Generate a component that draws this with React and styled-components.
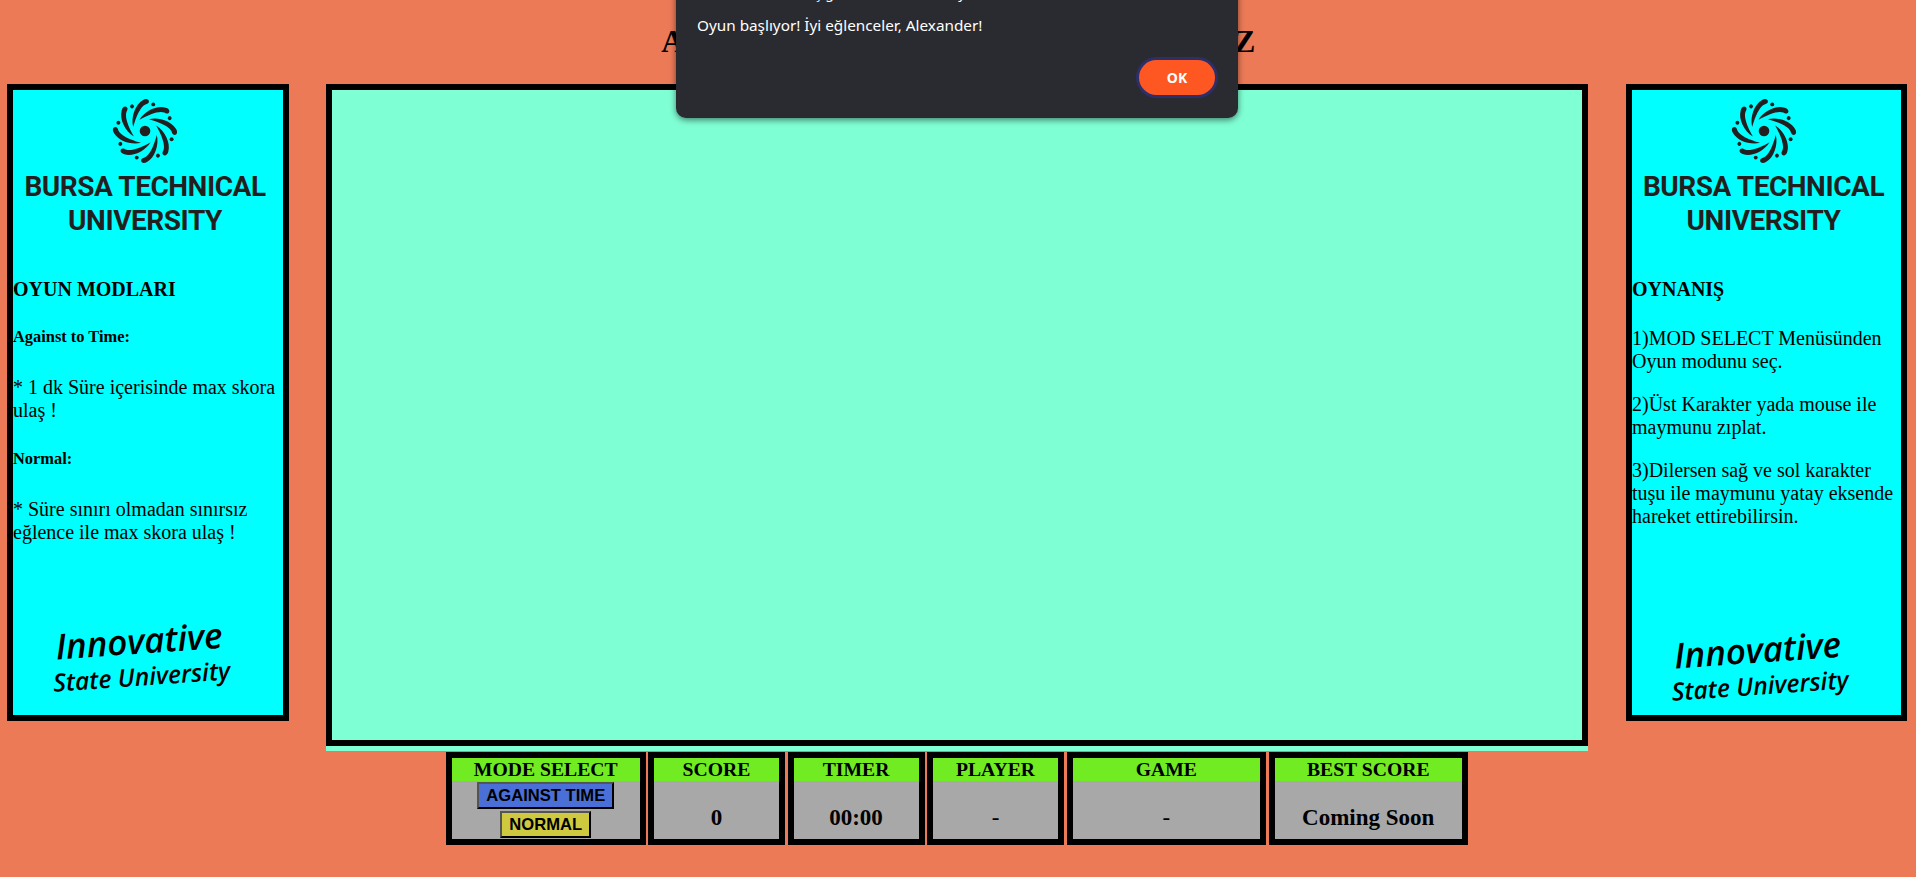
import React from "react";
import styled, { createGlobalStyle } from "styled-components";

const GlobalStyle = createGlobalStyle`
  html, body {
    margin: 0;
    padding: 0;
    background: #ec7a57;
    font-family: "Liberation Serif", "Times New Roman", serif;
    color: #000;
    overflow: hidden;
  }
`;

function Emblem() {
  const angles = [0, 45, 90, 135, 180, 225, 270, 315];
  return (
    <EmblemSvg viewBox="-34.5 -34.5 69 69">
      <circle r="5.4" fill="#231f20" />
      {angles.map((a) => (
        <g key={a} transform={`rotate(${a})`} fill="#231f20">
          <path d="M-12 -4 C-14.5 -14 -10 -27 -2 -31.5 C1 -33.5 4 -32.5 4 -30 C4 -28 2 -27.5 0.5 -27 C-4.5 -25 -9 -15 -12 -4 Z" />
          <circle cx="8.4" cy="-27" r="2" />
        </g>
      ))}
    </EmblemSvg>
  );
}

function Panel({ children, scriptGap, width }) {
  return (
    <SidePanel $width={width}>
      <LogoBlock>
        <Emblem />
        <LogoText>BURSA TECHNICAL<br />UNIVERSITY</LogoText>
      </LogoBlock>
      <PanelBody>{children}</PanelBody>
      <Motto $gap={scriptGap}>
        <MottoBig>Innovative</MottoBig>
        <MottoSmall>State University</MottoSmall>
      </Motto>
    </SidePanel>
  );
}

function StatBox({ title, value, wide, light }) {
  return (
    <Stat $wide={wide}>
      <StatTitle>{title}</StatTitle>
      <StatValue $light={light}>{value}</StatValue>
    </Stat>
  );
}

export default function App() {
  return (
    <Page>
      <GlobalStyle />
      <Title>ALEXANDER OYUNUNA HOŞGELDİNİZ</Title>
      <Columns>
        <Panel scriptGap={55} width={282}>
          <PanelHeading>OYUN MODLARI</PanelHeading>
          <SubHeading>Against to Time:</SubHeading>
          <PanelText>* 1 dk Süre içerisinde max skora ulaş !</PanelText>
          <SubHeading>Normal:</SubHeading>
          <PanelText>* Süre sınırı olmadan sınırsız eğlence ile max skora ulaş !</PanelText>
        </Panel>
        <Middle>
          <GameArea>
            <Canvas />
          </GameArea>
          <StatusBar>
            <Stat $wide>
              <StatTitle>MODE SELECT</StatTitle>
              <ModeButton $color="#4a6fd6">AGAINST TIME</ModeButton>
              <ModeButton $color="#cfc93f">NORMAL</ModeButton>
            </Stat>
            <StatBox title="SCORE" value="0" />
            <StatBox title="TIMER" value="00:00" />
            <StatBox title="PLAYER" value="-" light />
            <StatBox title="GAME" value="-" wide light />
            <StatBox title="BEST SCORE" value="Coming Soon" wide />
          </StatusBar>
        </Middle>
        <Panel scriptGap={80} width={281}>
          <PanelHeading>OYNANIŞ</PanelHeading>
          <PanelText>1)MOD SELECT Menüsünden Oyun modunu seç.</PanelText>
          <PanelText>2)Üst Karakter yada mouse ile maymunu zıplat.</PanelText>
          <PanelText>3)Dilersen sağ ve sol karakter tuşu ile maymunu yatay eksende hareket ettirebilirsin.</PanelText>
        </Panel>
      </Columns>
      <Dialog>
        <DialogTitle>Hoş geldin, Alexander! Oyuna hazır mısın?</DialogTitle>
        <DialogText>Oyun başlıyor! İyi eğlenceler, Alexander!</DialogText>
        <DialogActions>
          <OkButton>OK</OkButton>
        </DialogActions>
      </Dialog>
    </Page>
  );
}

const Page = styled.div`
  position: relative;
  height: 877px;
  overflow: hidden;
`;

const Title = styled.h1`
  margin: 0;
  height: 84px;
  padding-top: 23px;
  box-sizing: border-box;
  text-align: center;
  font-size: 32px;
  letter-spacing: -0.5px;
  line-height: 37px;
  font-weight: bold;
`;

const Columns = styled.div`
  display: flex;
  align-items: flex-start;
  padding: 0 9px 0 7px;
`;

const SidePanel = styled.aside`
  width: ${(p) => p.$width}px;
  height: 637px;
  box-sizing: border-box;
  border: 6px solid #000;
  background: #00ffff;
  display: flex;
  flex-direction: column;
`;

const LogoBlock = styled.div`
  display: flex;
  flex-direction: column;
  align-items: center;
  padding: 7px 6px 0 0;
`;

const EmblemSvg = styled.svg`
  width: 68px;
  height: 68px;
`;

const LogoText = styled.div`
  margin-top: 5px;
  font-family: Roboto, "Liberation Sans", sans-serif;
  font-weight: 700;
  font-size: 28px;
  letter-spacing: -0.45px;
  line-height: 34px;
  text-align: center;
  white-space: nowrap;
  color: #231f20;
`;

const PanelBody = styled.div`
  margin-top: 40px;
`;

const PanelHeading = styled.h3`
  margin: 0 0 26px;
  font-size: 20px;
  line-height: 23px;
`;

const SubHeading = styled.h4`
  margin: 28px 0 30px;
  font-size: 16.4px;
  line-height: 18px;

  ${PanelHeading} + & {
    margin-top: 27px;
  }
`;

const PanelText = styled.p`
  margin: 0 0 20px;
  font-size: 20px;
  line-height: 23px;
`;

const Motto = styled.div`
  margin-top: ${(p) => p.$gap}px;
  padding-right: 16px;
  transform: rotate(-4deg);
  text-align: center;
  font-family: "Open Sans", sans-serif;
  font-style: italic;
  font-weight: 600;
`;

const MottoBig = styled.div`
  font-size: 35px;
  line-height: 42px;
`;

const MottoSmall = styled.div`
  font-size: 24.7px;
  line-height: 30px;
`;

const Middle = styled.main`
  width: 1262px;
  margin: 0 38px 0 37px;
  display: flex;
  flex-direction: column;
  align-items: center;
`;

const GameArea = styled.div`
  width: 100%;
  background: #7fffd4;
  padding-bottom: 5px;
`;

const Canvas = styled.div`
  height: 662px;
  box-sizing: border-box;
  border: 6px solid #000;
  background: #7fffd4;
`;

const StatusBar = styled.div`
  display: flex;
  gap: 2.5px;
  margin-top: 1px;
`;

const Stat = styled.section`
  width: ${(p) => (p.$wide ? 199.5 : 137)}px;
  height: 93px;
  box-sizing: border-box;
  border: 6px solid #000;
  background: #a8a8a8;
  display: flex;
  flex-direction: column;
  align-items: center;
`;

const StatTitle = styled.div`
  align-self: stretch;
  height: 23px;
  background: #71ec22;
  text-align: center;
  font-size: 19.7px;
  line-height: 23px;
  font-weight: bold;
`;

const StatValue = styled.div`
  margin-top: 24px;
  font-size: 23px;
  line-height: 26px;
  font-weight: ${(p) => (p.$light ? "normal" : "bold")};
`;

const ModeButton = styled.button`
  height: 27px;
  margin-top: 1px;
  padding: 0 7.25px;
  border: 2px outset #000;
  background: ${(p) => p.$color};
  font-family: "Liberation Sans", Arial, sans-serif;
  font-size: 16.6px;
  font-weight: bold;
  color: #000;

  & + & {
    margin-top: 2px;
  }
`;

const Dialog = styled.div`
  position: absolute;
  left: 676px;
  top: -60px;
  width: 562px;
  height: 178px;
  box-sizing: border-box;
  padding: 0 23px 0 21px;
  background: #2a2b30;
  border-radius: 10px;
  box-shadow: 0 2px 6px rgba(0, 0, 0, 0.5);
  color: #fff;
  font-family: "Noto Sans", "Open Sans", sans-serif;
  font-size: 15.3px;
`;

const DialogTitle = styled.div`
  position: absolute;
  left: 120px;
  top: 44px;
  font-size: 14px;
  line-height: 18px;
`;

const DialogText = styled.p`
  margin: 75px 0 0;
  line-height: 20px;
`;

const DialogActions = styled.div`
  display: flex;
  justify-content: flex-end;
  margin-top: 25px;
`;

const OkButton = styled.button`
  width: 76px;
  height: 35px;
  border: none;
  border-radius: 18px;
  background: #ff5722;
  box-shadow: 0 0 0 3px #2d2f6b;
  color: #fff;
  font-family: "Noto Sans", sans-serif;
  font-weight: 700;
  font-size: 14px;
`;
